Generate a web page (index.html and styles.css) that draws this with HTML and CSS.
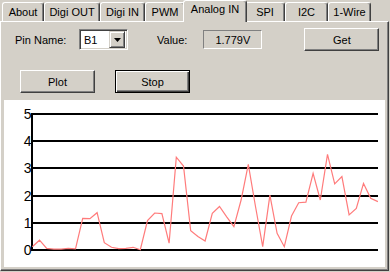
FILE: index.html
```html
<!DOCTYPE html>
<html lang="en">
<head>
    <meta charset="UTF-8">
    <title>Analog IN</title>
    <link rel="stylesheet" href="styles.css">
</head>
<body>

    <div class="tabs">
        <div class="tab tab-about">About</div>
        <div class="tab tab-digiout">Digi OUT</div>
        <div class="tab tab-digiin">Digi IN</div>
        <div class="tab tab-pwm">PWM</div>
        <div class="tab tab-analog active">Analog IN</div>
        <div class="tab tab-spi">SPI</div>
        <div class="tab tab-i2c">I2C</div>
        <div class="tab tab-wire">1-Wire</div>
    </div>

    <div class="panel">
        <div class="row row-top">
            <span class="label pin-label">Pin Name:</span>
            <div class="combo">
                <span class="combo-text">B1</span>
                <span class="combo-btn">
                    <svg width="7" height="4" viewBox="0 0 7 4"><path d="M0 0h7L3.5 4z" fill="#000"/></svg>
                </span>
            </div>
            <span class="label value-label">Value:</span>
            <div class="value-box">1.779V</div>
            <button class="btn btn-get">Get</button>
        </div>

        <div class="row row-buttons">
            <button class="btn">Plot</button>
            <button class="btn btn-default">Stop</button>
        </div>

        <div class="plot">
            <svg width="381" height="167" viewBox="0 0 381 167">
                <g stroke="#000" stroke-width="2">
                    <line x1="28" y1="14" x2="374" y2="14"/>
                    <line x1="28" y1="41" x2="374" y2="41"/>
                    <line x1="28" y1="68" x2="374" y2="68"/>
                    <line x1="28" y1="96" x2="374" y2="96"/>
                    <line x1="28" y1="123" x2="374" y2="123"/>
                    <line x1="28" y1="150" x2="374" y2="150"/>
                    <line x1="28" y1="13" x2="28" y2="151"/>
                </g>
                <g class="axis-labels" text-anchor="end">
                    <text x="27.5" y="19">5</text>
                    <text x="27.5" y="46">4</text>
                    <text x="27.5" y="73">3</text>
                    <text x="27.5" y="101">2</text>
                    <text x="27.5" y="128">1</text>
                    <text x="27.5" y="155">0</text>
                </g>
                <polyline fill="none" stroke="#ff7b7b" stroke-width="1.2" points="
                    28.3,146.7 35.5,140.2 42.7,148.4 49.9,149.2 57.1,149.2 64.3,148.4 71.5,148.9
                    78.7,118.4 85.9,118.7 93.1,112.7 100.3,142.7 107.5,147.3 114.7,148.6 121.9,148.4
                    129.1,147.3 136.3,149.7 143.5,120.6 150.7,113.0 157.9,113.6 165.1,143.2 172.3,57.2
                    179.5,66.0 186.7,130.7 193.9,136.4 201.1,141.0 208.3,113.3 215.5,106.5 222.7,116.8
                    229.9,126.6 237.1,100.0 244.3,64.3 251.5,106.5 258.7,146.7 265.9,95.1 273.1,133.4
                    280.3,146.7 287.5,116.0 294.7,102.7 301.9,102.1 309.1,73.3 316.3,100.0 323.5,54.3
                    330.7,83.9 337.9,76.6 345.1,114.9 352.3,108.4 359.5,83.4 366.7,98.3 373.9,101.6"/>
            </svg>
        </div>
    </div>

</body>
</html>
```

FILE: styles.css
```css
/* Basic Styling */
body {
    margin: 0;
    padding: 0;
    width: 390px;
    height: 272px;
    overflow: hidden;
    background-color: #d4d0c8;
    font-family: "Liberation Sans", Arial, sans-serif;
    font-size: 11px;
    color: #000;
}

/* Tab strip */
.tabs {
    display: flex;
    align-items: flex-end;
    height: 21px;
    padding-left: 2px;
    position: relative;
    z-index: 1;
}

.tab {
    box-sizing: border-box;
    height: 19px;
    display: flex;
    align-items: center;
    justify-content: center;
    background-color: #d4d0c8;
    border-top: 1px solid #fff;
    border-left: 1px solid #fff;
    border-right: 1px solid #404040;
    border-radius: 3px 3px 0 0;
    box-shadow: inset -1px 0 #808080;
    white-space: nowrap;
}

.tab-about { width: 42px; }
.tab-digiout { width: 56px; }
.tab-digiin { width: 45px; }
.tab-pwm { width: 40px; }
.tab-analog { width: 64px; }
.tab-spi { width: 40px; }
.tab-i2c { width: 43px; }
.tab-wire { width: 43px; }

.tab.active {
    height: 22px;
    margin: 0 -2px -1px;
    align-items: flex-start;
    padding-top: 2px;
    position: relative;
    z-index: 2;
}

/* Tab page */
.panel {
    box-sizing: border-box;
    width: 389px;
    height: 250px;
    padding: 0 3px 3px;
    display: flex;
    flex-direction: column;
    border-top: 1px solid #fff;
    border-left: 1px solid #fff;
    border-right: 1px solid #404040;
    border-bottom: 1px solid #404040;
    box-shadow: inset -1px -1px #808080;
}

.row {
    display: flex;
    align-items: center;
    height: 23px;
}

.row-top {
    margin-top: 6px;
    padding-left: 11px;
}

.row-buttons {
    margin-top: 19px;
    padding-left: 16px;
    gap: 20px;
}

.pin-label {
    width: 64px;
}

.value-label {
    margin-left: 29px;
}

/* Combo box */
.combo {
    box-sizing: border-box;
    width: 49px;
    height: 21px;
    display: flex;
    align-items: center;
    justify-content: space-between;
    background: #fff;
    border-top: 1px solid #808080;
    border-left: 1px solid #808080;
    border-right: 1px solid #fff;
    border-bottom: 1px solid #fff;
    box-shadow: inset 1px 1px #404040, inset -1px -1px #d4d0c8;
    padding: 2px;
}

.combo-text {
    padding-left: 2px;
}

.combo-btn {
    box-sizing: border-box;
    width: 16px;
    height: 17px;
    display: flex;
    align-items: center;
    justify-content: center;
    background: #d4d0c8;
    border-top: 1px solid #d4d0c8;
    border-left: 1px solid #d4d0c8;
    border-right: 1px solid #404040;
    border-bottom: 1px solid #404040;
    box-shadow: inset 1px 1px #fff, inset -1px -1px #808080;
}

/* Value readout */
.value-box {
    box-sizing: border-box;
    width: 59px;
    height: 19px;
    margin-left: 16px;
    display: flex;
    align-items: center;
    justify-content: center;
    border-top: 1px solid #808080;
    border-left: 1px solid #808080;
    border-right: 1px solid #fff;
    border-bottom: 1px solid #fff;
}

/* Buttons */
.btn {
    box-sizing: border-box;
    width: 75px;
    height: 23px;
    padding: 0;
    font-family: inherit;
    font-size: 11px;
    color: #000;
    background: #d4d0c8;
    border-top: 1px solid #fff;
    border-left: 1px solid #fff;
    border-right: 1px solid #404040;
    border-bottom: 1px solid #404040;
    border-radius: 0;
    box-shadow: inset -1px -1px #808080;
}

.btn-default {
    border: 1px solid #000;
    box-shadow: inset 1px 1px #fff, inset -1px -1px #404040, inset -2px -2px #808080;
}

.btn-get {
    margin-left: 42px;
}

/* Chart */
.plot {
    margin-top: 7px;
    height: 167px;
    background: #fff;
}

.plot svg {
    display: block;
}

.axis-labels {
    font-family: "Liberation Sans", Arial, sans-serif;
    font-size: 14px;
    fill: #000;
}
```
